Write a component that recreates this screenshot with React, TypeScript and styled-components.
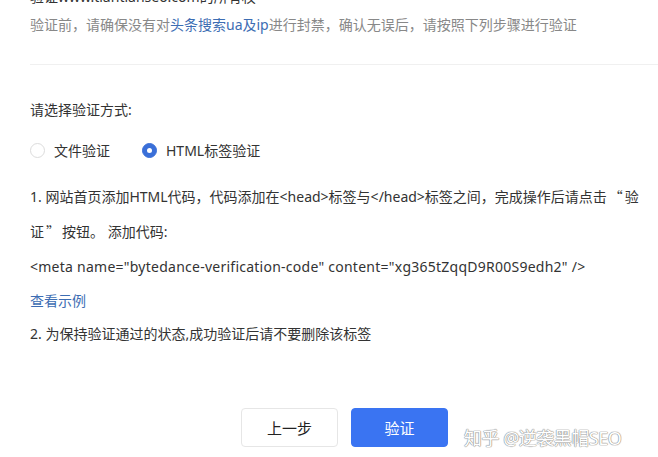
import React from "react";
import styled, { createGlobalStyle } from "styled-components";

const GlobalStyle = createGlobalStyle`
  html, body {
    margin: 0;
    padding: 0;
    background: #fff;
    overflow: hidden;
  }
  body {
    font-family: "Noto Sans", "Noto Sans CJK SC", sans-serif;
    font-size: 14px;
    color: #333;
  }
`;

const Page = styled.div`
  width: 658px;
  height: 457px;
  padding-left: 30px;
  box-sizing: border-box;
  overflow: hidden;
`;

const Header = styled.div`
  margin-top: -17px;
  line-height: 28px;
`;

const OwnerLine = styled.div`
  color: #333;
  white-space: nowrap;
`;

const Notice = styled.div`
  color: #888;
`;

const Highlight = styled.span`
  color: #3d6db3;
`;

const Divider = styled.div`
  margin-top: 25px;
  height: 1px;
  background: #f0f0f0;
`;

const Title = styled.div`
  margin-top: 31px;
  line-height: 28px;
  color: #333;
`;

const RadioRow = styled.div`
  margin-top: 12px;
  height: 28px;
  display: flex;
  align-items: center;
  gap: 32px;
`;

const RadioItem = styled.label`
  display: flex;
  align-items: center;
  gap: 9px;
  color: #333;
`;

const RadioMark = styled.span<{ $checked?: boolean }>`
  width: 15px;
  height: 15px;
  box-sizing: border-box;
  border-radius: 50%;
  border: 1px solid ${({ $checked }) => ($checked ? "#3a6fd8" : "#dcdcdc")};
  background: ${({ $checked }) => ($checked ? "#3a6fd8" : "#fff")};
  display: flex;
  align-items: center;
  justify-content: center;
  &::after {
    content: "";
    width: 5px;
    height: 5px;
    border-radius: 50%;
    background: #fff;
    display: ${({ $checked }) => ($checked ? "block" : "none")};
  }
`;

const Step = styled.div`
  margin-top: 15px;
  width: 628px;
  line-height: 35px;
  color: #333;
`;

const CjkQuote = styled.span`
  font-family: "Noto Sans CJK SC", sans-serif;
  margin: 0 2px;
`;

const Code = styled.div`
  line-height: 35px;
  color: #333;
  letter-spacing: 0.25px;
  white-space: nowrap;
`;

const Link = styled.a`
  display: block;
  line-height: 33px;
  color: #3d6db3;
  text-decoration: none;
`;

const StepTwo = styled.div`
  line-height: 33px;
  color: #333;
`;

const Actions = styled.div`
  margin-top: 54px;
  padding-left: 211px;
  display: flex;
  align-items: center;
  gap: 13px;
`;

const Button = styled.button<{ $primary?: boolean }>`
  width: 97px;
  height: 39px;
  border-radius: 4px;
  font-family: inherit;
  font-size: 15px;
  border: 1px solid ${({ $primary }) => ($primary ? "#3a74f2" : "#e6e6e6")};
  background: ${({ $primary }) => ($primary ? "#3a74f2" : "#fff")};
  color: ${({ $primary }) => ($primary ? "#fff" : "#222")};
  cursor: pointer;
`;

const Watermark = styled.span`
  margin-left: 3px;
  margin-top: 20px;
  font-size: 18px;
  color: #fff;
  letter-spacing: -0.5px;
  text-shadow: 0 0 1px #888, 0 0 1px #888, 0 0 1px #999;
  white-space: nowrap;
`;

export default function App() {
  return (
    <Page>
      <GlobalStyle />
      <Header>
        <OwnerLine>验证www.tiantianseo.com的所有权</OwnerLine>
        <Notice>
          验证前，请确保没有对<Highlight>头条搜索ua及ip</Highlight>进行封禁，确认无误后，请按照下列步骤进行验证
        </Notice>
      </Header>
      <Divider />
      <Title>请选择验证方式:</Title>
      <RadioRow>
        <RadioItem>
          <RadioMark />
          文件验证
        </RadioItem>
        <RadioItem>
          <RadioMark $checked />
          HTML标签验证
        </RadioItem>
      </RadioRow>
      <Step>
        1. 网站首页添加HTML代码，代码添加在&lt;head&gt;标签与&lt;/head&gt;标签之间，完成操作后请点击
        <CjkQuote>“</CjkQuote>验证<CjkQuote>”</CjkQuote>按钮。 添加代码:
        <Code>
          &lt;meta name="bytedance-verification-code" content="xg365tZqqD9R00S9edh2" /&gt;
        </Code>
      </Step>
      <Link href="#">查看示例</Link>
      <StepTwo>2. 为保持验证通过的状态,成功验证后请不要删除该标签</StepTwo>
      <Actions>
        <Button>上一步</Button>
        <Button $primary>验证</Button>
        <Watermark>知乎 @逆袭黑帽SEO</Watermark>
      </Actions>
    </Page>
  );
}
